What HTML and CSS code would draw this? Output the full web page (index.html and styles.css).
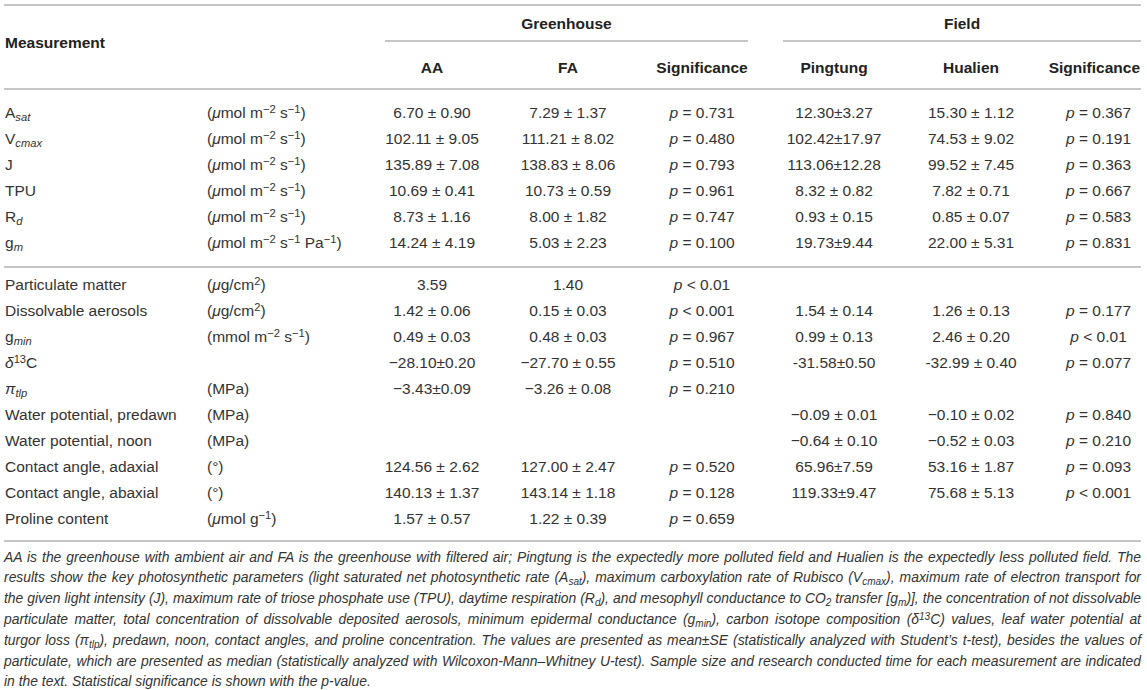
FILE: index.html
```html
<!DOCTYPE html>
<html lang="en">
<head>
<meta charset="utf-8">
<title>Table</title>
<link rel="stylesheet" href="styles.css">
</head>
<body>
<div class="page">
  <table class="data">
    <colgroup>
      <col class="c-label"><col class="c-unit"><col class="c-aa"><col class="c-fa"><col class="c-sig"><col class="c-gap"><col class="c-pt"><col class="c-hl"><col class="c-sig2">
    </colgroup>
    <thead>
      <tr class="group-row">
        <th rowspan="2" colspan="2" class="measure">Measurement</th>
        <th colspan="3" class="group"><div class="group-label gh">Greenhouse</div></th>
        <th class="gap"></th>
        <th colspan="3" class="group"><div class="group-label fd">Field</div></th>
      </tr>
      <tr class="sub-row">
        <th>AA</th><th>FA</th><th>Significance</th><th class="gap"></th><th>Pingtung</th><th>Hualien</th><th class="last-sig"><span>Significance</span></th>
      </tr>
    </thead>
    <tbody class="block1">
      <tr><td class="lbl">A<sub><i>sat</i></sub></td><td class="unit">(<i>μ</i>mol m<sup>−2</sup> s<sup>−1</sup>)</td><td>6.70 ± 0.90</td><td>7.29 ± 1.37</td><td><i>p</i> = 0.731</td><td></td><td>12.30±3.27</td><td>15.30 ± 1.12</td><td><i>p</i> = 0.367</td></tr>
      <tr><td class="lbl">V<sub><i>cmax</i></sub></td><td class="unit">(<i>μ</i>mol m<sup>−2</sup> s<sup>−1</sup>)</td><td>102.11 ± 9.05</td><td>111.21 ± 8.02</td><td><i>p</i> = 0.480</td><td></td><td>102.42±17.97</td><td>74.53 ± 9.02</td><td><i>p</i> = 0.191</td></tr>
      <tr><td class="lbl">J</td><td class="unit">(<i>μ</i>mol m<sup>−2</sup> s<sup>−1</sup>)</td><td>135.89 ± 7.08</td><td>138.83 ± 8.06</td><td><i>p</i> = 0.793</td><td></td><td>113.06±12.28</td><td>99.52 ± 7.45</td><td><i>p</i> = 0.363</td></tr>
      <tr><td class="lbl">TPU</td><td class="unit">(<i>μ</i>mol m<sup>−2</sup> s<sup>−1</sup>)</td><td>10.69 ± 0.41</td><td>10.73 ± 0.59</td><td><i>p</i> = 0.961</td><td></td><td>8.32 ± 0.82</td><td>7.82 ± 0.71</td><td><i>p</i> = 0.667</td></tr>
      <tr><td class="lbl">R<sub><i>d</i></sub></td><td class="unit">(<i>μ</i>mol m<sup>−2</sup> s<sup>−1</sup>)</td><td>8.73 ± 1.16</td><td>8.00 ± 1.82</td><td><i>p</i> = 0.747</td><td></td><td>0.93 ± 0.15</td><td>0.85 ± 0.07</td><td><i>p</i> = 0.583</td></tr>
      <tr><td class="lbl">g<sub><i>m</i></sub></td><td class="unit">(<i>μ</i>mol m<sup>−2</sup> s<sup>−1</sup> Pa<sup>−1</sup>)</td><td>14.24 ± 4.19</td><td>5.03 ± 2.23</td><td><i>p</i> = 0.100</td><td></td><td>19.73±9.44</td><td>22.00 ± 5.31</td><td><i>p</i> = 0.831</td></tr>
    </tbody>
    <tbody class="block2">
      <tr><td class="lbl">Particulate matter</td><td class="unit">(<i>μ</i>g/cm<sup>2</sup>)</td><td>3.59</td><td>1.40</td><td><i>p</i> &lt; 0.01</td><td></td><td></td><td></td><td></td></tr>
      <tr><td class="lbl">Dissolvable aerosols</td><td class="unit">(<i>μ</i>g/cm<sup>2</sup>)</td><td>1.42 ± 0.06</td><td>0.15 ± 0.03</td><td><i>p</i> &lt; 0.001</td><td></td><td>1.54 ± 0.14</td><td>1.26 ± 0.13</td><td><i>p</i> = 0.177</td></tr>
      <tr><td class="lbl">g<sub><i>min</i></sub></td><td class="unit">(mmol m<sup>−2</sup> s<sup>−1</sup>)</td><td>0.49 ± 0.03</td><td>0.48 ± 0.03</td><td><i>p</i> = 0.967</td><td></td><td>0.99 ± 0.13</td><td>2.46 ± 0.20</td><td><i>p</i> &lt; 0.01</td></tr>
      <tr><td class="lbl"><i>δ</i><sup>13</sup>C</td><td class="unit"></td><td>−28.10±0.20</td><td>−27.70 ± 0.55</td><td><i>p</i> = 0.510</td><td></td><td>-31.58±0.50</td><td>-32.99 ± 0.40</td><td><i>p</i> = 0.077</td></tr>
      <tr><td class="lbl"><i>π<sub>tlp</sub></i></td><td class="unit">(MPa)</td><td>−3.43±0.09</td><td>−3.26 ± 0.08</td><td><i>p</i> = 0.210</td><td></td><td></td><td></td><td></td></tr>
      <tr><td class="lbl">Water potential, predawn</td><td class="unit">(MPa)</td><td></td><td></td><td></td><td></td><td>−0.09 ± 0.01</td><td>−0.10 ± 0.02</td><td><i>p</i> = 0.840</td></tr>
      <tr><td class="lbl">Water potential, noon</td><td class="unit">(MPa)</td><td></td><td></td><td></td><td></td><td>−0.64 ± 0.10</td><td>−0.52 ± 0.03</td><td><i>p</i> = 0.210</td></tr>
      <tr><td class="lbl">Contact angle, adaxial</td><td class="unit">(°)</td><td>124.56 ± 2.62</td><td>127.00 ± 2.47</td><td><i>p</i> = 0.520</td><td></td><td>65.96±7.59</td><td>53.16 ± 1.87</td><td><i>p</i> = 0.093</td></tr>
      <tr><td class="lbl">Contact angle, abaxial</td><td class="unit">(°)</td><td>140.13 ± 1.37</td><td>143.14 ± 1.18</td><td><i>p</i> = 0.128</td><td></td><td>119.33±9.47</td><td>75.68 ± 5.13</td><td><i>p</i> &lt; 0.001</td></tr>
      <tr><td class="lbl">Proline content</td><td class="unit">(<i>μ</i>mol g<sup>−1</sup>)</td><td>1.57 ± 0.57</td><td>1.22 ± 0.39</td><td><i>p</i> = 0.659</td><td></td><td></td><td></td><td></td></tr>
    </tbody>
  </table>
  <p class="note">
    <span class="line">AA is the greenhouse with ambient air and FA is the greenhouse with filtered air; Pingtung is the expectedly more polluted field and Hualien is the expectedly less polluted field. The</span>
    <span class="line">results show the key photosynthetic parameters (light saturated net photosynthetic rate (A<sub>sat</sub>), maximum carboxylation rate of Rubisco (V<sub>cmax</sub>), maximum rate of electron transport for</span>
    <span class="line">the given light intensity (J), maximum rate of triose phosphate use (TPU), daytime respiration (R<sub>d</sub>), and mesophyll conductance to CO<sub>2</sub> transfer [g<sub>m</sub>)], the concentration of not dissolvable</span>
    <span class="line">particulate matter, total concentration of dissolvable deposited aerosols, minimum epidermal conductance (g<sub>min</sub>), carbon isotope composition (δ<sup>13</sup>C) values, leaf water potential at</span>
    <span class="line">turgor loss (π<sub>tlp</sub>), predawn, noon, contact angles, and proline concentration. The values are presented as mean±SE (statistically analyzed with Student’s t-test), besides the values of</span>
    <span class="line">particulate, which are presented as median (statistically analyzed with Wilcoxon-Mann–Whitney U-test). Sample size and research conducted time for each measurement are indicated</span>
    <span class="line end">in the text. Statistical significance is shown with the p-value.</span>
  </p>
</div>
</body>
</html>
```
FILE: styles.css
```css
html, body {
  margin: 0;
  padding: 0;
  background: #ffffff;
}
body {
  font-family: "Liberation Sans", Arial, Helvetica, sans-serif;
  color: #333333;
}
.page {
  width: 1137px;
  padding: 4px 6px 0 4px;
}
table.data {
  width: 1137px;
  table-layout: fixed;
  border-collapse: separate;
  border-spacing: 0;
  border-top: 2px solid #c6c6c6;
  font-size: 15.5px;
}
.c-label { width: 199px; }
.c-unit { width: 177px; }
.c-aa { width: 104px; }
.c-fa { width: 168px; }
.c-sig { width: 100px; }
.c-gap { width: 30px; }
.c-pt { width: 104px; }
.c-hl { width: 170px; }
.c-sig2 { width: 85px; }

th {
  font-weight: bold;
  color: #222222;
  white-space: nowrap;
}
.group-row th {
  height: 36px;
  padding: 0;
  vertical-align: bottom;
}
.group-label {
  line-height: 18px;
  padding-bottom: 7px;
  border-bottom: 2px solid #c6c6c6;
  text-align: center;
}
.group-label.gh { margin: 0 4px 0 5px; }
.group-label.fd { margin: 0 0 0 1px; }
th.measure {
  text-align: left;
  vertical-align: middle;
  padding: 0 0 8px 1px;
  line-height: 18px;
  border-bottom: 2px solid #c6c6c6;
}
.sub-row th {
  line-height: 18px;
  padding: 17px 0 11px;
  text-align: center;
  border-bottom: 2px solid #c6c6c6;
}
.sub-row th.last-sig span {
  display: block;
  margin-left: -16px;
  padding-right: 1px;
  text-align: right;
}
td {
  text-align: center;
  white-space: nowrap;
  line-height: 18px;
  padding: 4px 0;
}
td.lbl {
  text-align: left;
  padding-left: 1px;
}
td.unit {
  text-align: left;
  padding-left: 4px;
}
.block1 tr:first-child td { padding-top: 14px; }
.block1 tr:last-child td {
  padding-bottom: 14px;
  border-bottom: 2px solid #c6c6c6;
}
.block2 tr:first-child td { padding-top: 8px; }
.block2 tr:last-child td {
  padding-bottom: 12px;
  border-bottom: 2px solid #c6c6c6;
}
sub, sup {
  font-size: 0.72em;
  line-height: 0;
}
sub { vertical-align: -0.25em; }
sup { vertical-align: 0.45em; }

.note {
  margin: 4.6px 0 0;
  font-style: italic;
  font-size: 13.9px;
  line-height: 20.8px;
  color: #333333;
}
.note .line {
  display: block;
  white-space: nowrap;
  text-align: justify;
  text-align-last: justify;
}
.note .line.end {
  text-align: left;
  text-align-last: left;
}
```
